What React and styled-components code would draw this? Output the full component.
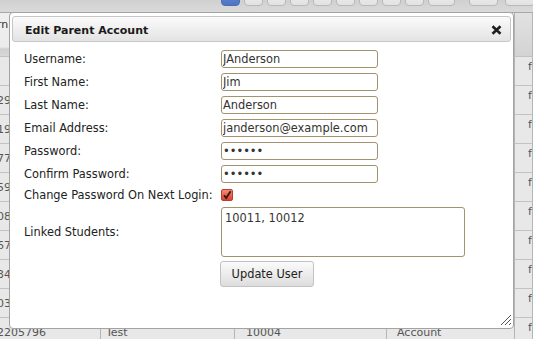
import React from 'react';
import styled, { createGlobalStyle } from 'styled-components';

const Global = createGlobalStyle`
  html, body { margin: 0; padding: 0; }
  body {
    width: 533px; height: 339px; overflow: hidden;
    background: #e6e6e6;
    font-family: "DejaVu Sans", Verdana, sans-serif;
  }
`;

const Page = styled.div`
  position: relative;
  width: 533px;
  height: 339px;
  overflow: hidden;
  background: #e6e6e6;
`;

const Toolbar = styled.div`
  height: 12px;
  overflow: hidden;
  display: flex;
  align-items: flex-start;
  padding-left: 221px;
  background: linear-gradient(#d0d0d0, #dadada);
  border-bottom: 1px solid #a8a8a8;
`;

const PageBtn = styled.div`
  flex: none;
  width: ${p => p.$w || 19}px;
  height: 20px;
  margin-right: ${p => p.$gap ?? 4}px;
  margin-top: -14px;
  box-sizing: border-box;
  border: 1px solid ${p => (p.$active ? '#4a6cb3' : '#b9b9b9')};
  border-radius: 4px;
  background: ${p => (p.$active ? 'linear-gradient(#6d90d6, #4f74c4)' : 'linear-gradient(#f4f4f4, #e2e2e2)')};
  color: ${p => (p.$active ? '#fff' : '#333')};
  font-size: 11px;
  line-height: 17px;
  text-align: center;
`;

const Grid = styled.div`
  display: grid;
  grid-template-columns: 101px 134px 152px 128px 1fr;
  font-size: 11px;
  color: #555;
`;

const HeadCell = styled.div`
  height: 43px;
  box-sizing: border-box;
  padding-top: 5px;
  background: ${p => (p.$dark ? 'linear-gradient(#e2e2e2, #d3d3d3)' : 'linear-gradient(#efefef 0, #ececec 34px, #cfcfcf 36px, #d9d9d9 43px)')};
  border-right: 1px solid #b5b5b5;
  color: #333;
  white-space: nowrap;
  overflow: hidden;
  text-indent: ${p => p.$indent || 0}px;
`;

const Cell = styled.div`
  height: 29px;
  box-sizing: border-box;
  border-top: 1px solid #c2c2c2;
  border-right: 1px solid #b5b5b5;
  background: #e8e8e8;
  display: flex;
  align-items: ${p => (p.$top ? 'flex-start' : 'center')};
  padding-top: ${p => (p.$top ? 3 : 0)}px;
  padding-left: ${p => p.$pl || 0}px;
  text-indent: ${p => p.$indent || 0}px;
  white-space: nowrap;
  overflow: hidden;
`;

const Orange = styled.span`
  color: #e8901a;
`;

const Dialog = styled.div`
  position: absolute;
  left: 9px;
  top: 12px;
  width: 505px;
  height: 317px;
  box-sizing: border-box;
  padding: 3px 2px 2px;
  background: #fff;
  border: 1px solid #a3a3a3;
  border-radius: 4px;
`;

const TitleBar = styled.div`
  height: 26px;
  box-sizing: border-box;
  display: flex;
  align-items: center;
  justify-content: space-between;
  padding: 2px 8px 0 12px;
  border: 1px solid #c6c6c6;
  border-radius: 3px;
  background: linear-gradient(#fbfbfb, #e3e3e3);
`;

const Title = styled.span`
  font-size: 11px;
  font-weight: bold;
  color: #1a1a1a;
`;

const Content = styled.div`
  padding: 8px 0 0 12px;
`;

const Form = styled.div`
  display: grid;
  grid-template-columns: 197px auto;
  row-gap: 5px;
  align-items: center;
  font-size: 11.4px;
  color: #222;
`;

const Label = styled.label`
  white-space: nowrap;
`;

const Field = styled.input`
  width: 157px;
  height: 18px;
  box-sizing: border-box;
  margin: 0;
  padding: 0 1px;
  border: 1px solid #a3916f;
  border-radius: 3px;
  font-family: "DejaVu Sans", Verdana, sans-serif;
  font-size: 11.4px;
  color: #333;
  background: #fff;
  outline: none;
`;

const CheckWrap = styled.div`
  height: 12px;
  display: flex;
  align-items: center;
`;

const CheckBox = styled.span`
  width: 12px;
  height: 12px;
  box-sizing: border-box;
  border: 1px solid #b6402d;
  border-radius: 2px;
  background: linear-gradient(#f58a74, #d9442e);
  display: flex;
  align-items: center;
  justify-content: center;
`;

const Area = styled.textarea`
  width: 244px;
  height: 50px;
  box-sizing: border-box;
  margin: 0;
  padding: 3px;
  border: 1px solid #a3916f;
  border-radius: 3px;
  font-family: "DejaVu Sans", Verdana, sans-serif;
  font-size: 11.4px;
  color: #333;
  resize: none;
  outline: none;
`;

const Button = styled.button`
  width: 94px;
  height: 26px;
  margin: -1px 0 0 -1px;
  padding: 0;
  box-sizing: border-box;
  border: 1px solid #c2c2c2;
  border-radius: 3px;
  background: linear-gradient(#fbfbfb, #dddddd);
  font-family: "DejaVu Sans", Verdana, sans-serif;
  font-size: 11.4px;
  color: #222;
`;

const Grip = styled.svg`
  position: absolute;
  right: 1px;
  bottom: 2px;
`;

const firstCol = ['', '2930514', '1984213', '7714402', '5920177', '0839120', '6750211', '3492044', '0311873'];

export default function App() {
  const pages = [
    { t: '1', a: true }, { t: '2' }, { t: '3' }, { t: '4' }, { t: '5' }, { t: '6' },
    { t: '7' }, { t: '8' }, { t: '9' }, { t: '10', w: 27, gap: 14 }, { t: '', w: 29, gap: 7 }, { t: '', w: 30 },
  ];
  return (
    <Page>
      <Global />
      <Toolbar>
        {pages.map((p, i) => (
          <PageBtn key={i} $active={p.a} $w={p.w} $gap={p.gap}>{p.t}</PageBtn>
        ))}
      </Toolbar>
      <Grid>
        <HeadCell $indent={-3}>rn</HeadCell>
        <HeadCell>First Name</HeadCell>
        <HeadCell>Student ID</HeadCell>
        <HeadCell>Type</HeadCell>
        <HeadCell $dark />
        {firstCol.map((v, i) => (
          <React.Fragment key={i}>
            <Cell $indent={-3}>{v}</Cell>
            <Cell $pl={5}>Test</Cell>
            <Cell $pl={11}>10004</Cell>
            <Cell $pl={10}>Account</Cell>
            <Cell $pl={13} $top>f<Orange>a</Orange></Cell>
          </React.Fragment>
        ))}
        <Cell $indent={-3}>2205796</Cell>
        <Cell $pl={5}>Test</Cell>
        <Cell $pl={11}>10004</Cell>
        <Cell $pl={10}>Account</Cell>
        <Cell $pl={13} $top>f<Orange>a</Orange></Cell>
      </Grid>

      <Dialog>
        <TitleBar>
          <Title>Edit Parent Account</Title>
          <svg width="11" height="10" viewBox="0 0 11 10">
            <path d="M1.5 1.2 L9.5 8.8 M9.5 1.2 L1.5 8.8" stroke="#1e1e1e" strokeWidth="2.6" fill="none" />
          </svg>
        </TitleBar>
        <Content>
          <Form>
            <Label>Username:</Label>
            <Field defaultValue="JAnderson" />
            <Label>First Name:</Label>
            <Field defaultValue="Jim" />
            <Label>Last Name:</Label>
            <Field defaultValue="Anderson" />
            <Label>Email Address:</Label>
            <Field defaultValue="janderson@example.com" />
            <Label>Password:</Label>
            <Field type="password" defaultValue="secret" />
            <Label>Confirm Password:</Label>
            <Field type="password" defaultValue="secret" />
            <Label>Change Password On Next Login:</Label>
            <CheckWrap>
              <CheckBox>
                <svg width="10" height="10" viewBox="0 0 10 10">
                  <path d="M2 5.2 L4.2 8 L8.6 1.2" stroke="#3a120c" strokeWidth="1.8" fill="none" />
                </svg>
              </CheckBox>
            </CheckWrap>
            <Label>Linked Students:</Label>
            <Area defaultValue="10011, 10012" />
            <span />
            <div><Button>Update User</Button></div>
          </Form>
        </Content>
        <Grip width="12" height="12" viewBox="0 0 12 12">
          <path d="M11 1 L1 11 M11 5 L5 11 M11 9 L9 11" stroke="#555" strokeWidth="1" fill="none" />
        </Grip>
      </Dialog>
    </Page>
  );
}
